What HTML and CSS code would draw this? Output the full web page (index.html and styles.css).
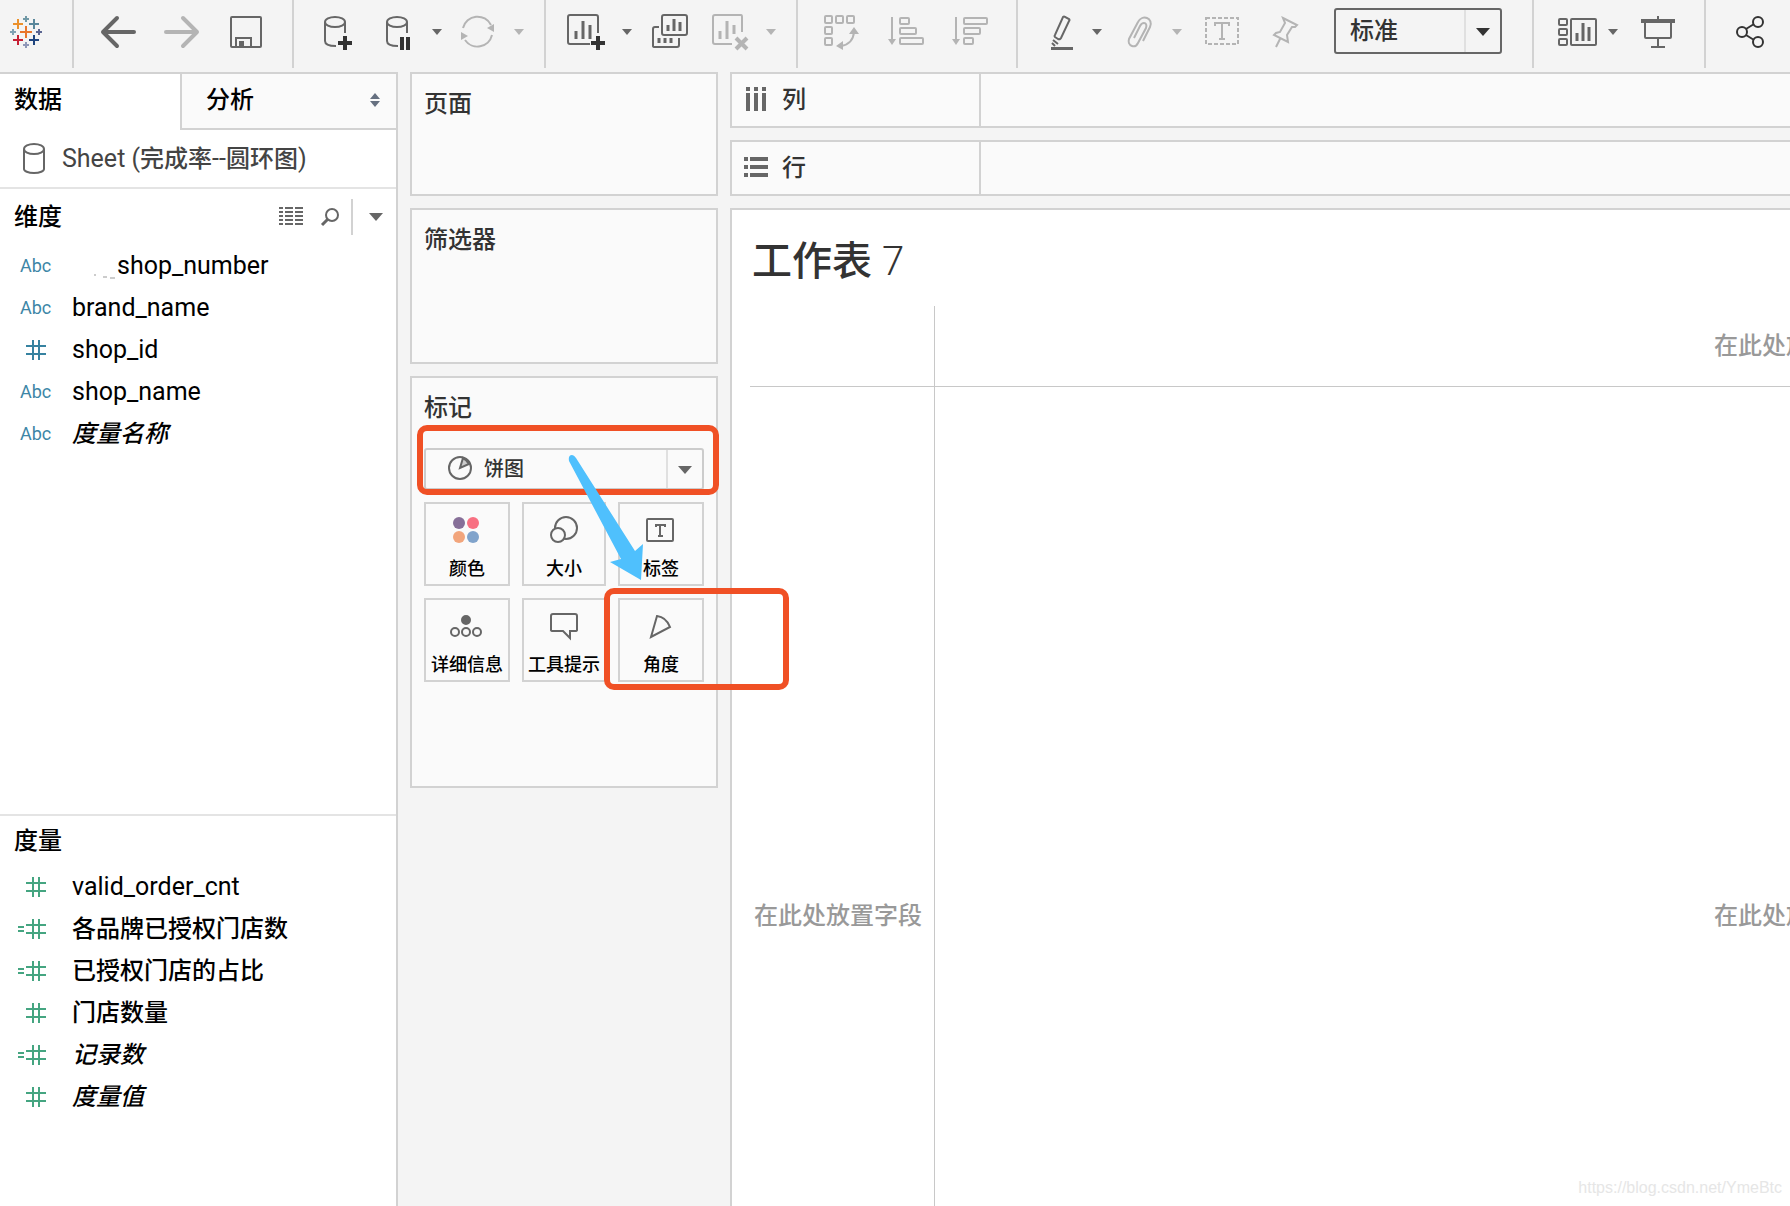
FILE: index.html
```html
<!DOCTYPE html>
<html lang="zh-CN">
<head>
<meta charset="utf-8">
<title>工作表 7</title>
<link rel="stylesheet" href="styles.css">
</head>
<body>
<div class="app">
  <header class="toolbar">
    <div class="group group-logo">
      <svg class="icon" viewBox="0 0 36 40" fill="none" stroke-width="2">
        <path stroke="#e8762c" d="M12 20h12M18 14v12"/>
        <path stroke="#7199a6" d="M15 7h6M18 4v6"/>
        <path stroke="#8f98b8" d="M15 33h6M18 30v6"/>
        <path stroke="#7fa2b4" d="M2 20h6M5 17v6"/>
        <path stroke="#5b6591" d="M28 20h6M31 17v6"/>
        <path stroke="#eb912c" d="M5 12h10M10 7v10"/>
        <path stroke="#59879b" d="M21 12h10M26 7v10"/>
        <path stroke="#c72035" d="M5 28h10M10 23v10"/>
        <path stroke="#1f447e" d="M21 28h10M26 23v10"/>
      </svg>
    </div>

    <div class="group group-even">
      <button class="tool" aria-label="撤消"><svg class="icon" viewBox="0 0 36 40"><path class="thick" d="M34 20H3M17 6 3 20l14 14"/></svg></button>
      <button class="tool off" aria-label="重做"><svg class="icon" viewBox="0 0 36 40"><path class="thick" d="M2 20h31M19 6l14 14-14 14"/></svg></button>
      <button class="tool" aria-label="保存"><svg class="icon" viewBox="0 0 36 40"><rect x="3" y="5" width="30" height="30" rx="1"/><path d="M8 35V26h15v9"/><path class="solid" d="M11 29h5v5h-5z"/></svg></button>
    </div>

    <div class="group group-data">
      <button class="tool" aria-label="新建数据源"><svg class="icon" viewBox="0 0 36 40"><ellipse cx="11" cy="10" rx="10" ry="5"/><path d="M1 10v19c0 3 4 5 11 5M21 10v11"/><path class="mark" d="M14 31h14M21 24v14"/></svg></button>
      <div class="split">
        <button class="tool" aria-label="暂停自动更新"><svg class="icon" viewBox="0 0 36 40"><ellipse cx="19" cy="10" rx="10" ry="5"/><path d="M9 10v19c0 3 4 5 11 5M29 10v11"/><path class="mark" d="M24 25v13M30 25v13"/></svg></button>
        <button class="caret" aria-label="更新选项"></button>
      </div>
      <div class="split off">
        <button class="tool" aria-label="运行更新"><svg class="icon" viewBox="0 0 36 40"><path d="M3 16a15 15 0 0 1 28-3M32 23a15 15 0 0 1-27 5"/><path class="solid" d="M34 12v8l-7-4zM1 20l7 4-7 4z"/></svg></button>
        <button class="caret" aria-label="运行选项"></button>
      </div>
    </div>

    <div class="group group-sheet">
      <div class="split">
        <button class="tool" aria-label="新建工作表"><svg class="icon" viewBox="0 0 36 40"><path d="M22 32H2q-2 0-2-2V5q0-2 2-2h26q2 0 2 2v16"/><path class="bar" d="M8 19v8M15 9v18M22 13v14"/><path class="mark" d="M23 31h14M30 24v14"/></svg></button>
        <button class="caret" aria-label="新建选项"></button>
      </div>
      <button class="tool" aria-label="复制工作表"><svg class="icon" viewBox="0 0 36 40"><rect x="8" y="3" width="25" height="20" rx="2"/><path d="M5 15H1q-2 0-2 2v17q0 1 2 1h22q2 0 2-2v-7"/><path class="bar" d="M14 13v6M20 7v12M26 10v9M5 26v5M11 26v5M17 26v5"/></svg></button>
      <div class="split off">
        <button class="tool" aria-label="清除工作表"><svg class="icon" viewBox="0 0 36 40"><path d="M20 32H3q-2 0-2-2V5q0-2 2-2h26q1 0 1 2v15"/><path class="bar" d="M8 19v8M15 9v18M22 13v9"/><path class="cross" d="M24 26l11 11M35 26L24 37"/></svg></button>
        <button class="caret" aria-label="清除选项"></button>
      </div>
    </div>

    <div class="group group-even off">
      <button class="tool" aria-label="交换行和列"><svg class="icon" viewBox="0 0 36 40"><rect x="1" y="4" width="7" height="7" rx="1"/><rect x="12" y="4" width="7" height="7" rx="1"/><rect x="23" y="4" width="7" height="7" rx="1"/><rect x="1" y="15" width="7" height="7" rx="1"/><rect x="1" y="26" width="7" height="7" rx="1"/><path d="M30 20q-1 12-13 14"/><path class="solid" d="M30 15l5 7H25zM12 34l7-5v9z"/></svg></button>
      <button class="tool" aria-label="升序排序"><svg class="icon" viewBox="0 0 36 40"><path d="M4 5v24"/><path class="solid" d="M0 27h8l-4 6z"/><rect x="12" y="6" width="9" height="6" rx="1"/><rect x="12" y="16" width="16" height="6" rx="1"/><rect x="12" y="26" width="23" height="6" rx="1"/></svg></button>
      <button class="tool" aria-label="降序排序"><svg class="icon" viewBox="0 0 36 40"><path d="M4 5v24"/><path class="solid" d="M0 27h8l-4 6z"/><rect x="12" y="6" width="23" height="6" rx="1"/><rect x="12" y="16" width="16" height="6" rx="1"/><rect x="12" y="26" width="9" height="6" rx="1"/></svg></button>
    </div>

    <div class="group group-format">
      <div class="split">
        <button class="tool" aria-label="突出显示"><svg class="icon" viewBox="0 0 36 40"><path d="M25 5q1-1 2 0l4 2q1 1 0 2l-8 17q-1 2-3 1l-3-2q-1-1 0-2zM15 28l5 4M14 31l3 3"/><path class="solid" d="M13 35h22v3H13z"/></svg></button>
        <button class="caret" aria-label="突出显示选项"></button>
      </div>
      <div class="split off">
        <button class="tool" aria-label="组成员"><svg class="icon" viewBox="0 0 36 40"><path d="M25 29l7-14c2-4 0-8-3-9s-7 0-9 4l-9 17c-1 3 0 6 3 7s5-1 6-3l8-15c1-3 0-5-2-5s-3 1-4 3l-6 12"/></svg></button>
        <button class="caret" aria-label="组选项"></button>
      </div>
      <div class="cluster">
        <button class="tool off" aria-label="显示标记标签"><svg class="icon" viewBox="0 0 36 40"><rect class="dash" x="0" y="6" width="32" height="26"/><path d="M9 14v-3h14v3M16 11v16M13 27h6"/></svg></button>
        <button class="tool off" aria-label="固定轴"><svg class="icon" viewBox="0 0 36 40"><path d="M13 6l14 7-2 2-3 0-5 8 1 7-14-7 2-2 4-1 5-9zM10 27L6 35"/></svg></button>
        <div class="fit">
          <select aria-label="适合"><option>标准</option></select>
          <span class="arrow"></span>
        </div>
      </div>
    </div>

    <div class="group group-view">
      <div class="split">
        <button class="tool" aria-label="显示/隐藏卡"><svg class="icon" viewBox="0 0 36 40"><rect x="5" y="7" width="8" height="6" rx="1"/><rect x="5" y="17" width="8" height="6" rx="1"/><rect x="5" y="27" width="8" height="6" rx="1"/><rect x="17" y="7" width="25" height="26" rx="1"/><path class="bar" d="M23 21v8M29 11v18M35 15v14"/></svg></button>
        <button class="caret" aria-label="卡选项"></button>
      </div>
      <button class="tool" aria-label="演示模式"><svg class="icon" viewBox="0 0 36 40"><path d="M5 10v15q0 1 1 1h24q1 0 1-1V10M18 4v4M18 26v9M11 35h14"/><path class="solid" d="M1 7h34v4H1z"/></svg></button>
    </div>

    <div class="group group-share">
      <button class="tool dark" aria-label="共享"><svg class="icon" viewBox="0 0 36 40"><circle cx="10" cy="20" r="5"/><circle cx="26" cy="10" r="5"/><circle cx="26" cy="30" r="5"/><path d="M14 17l8-5M14 23l8 5"/></svg></button>
    </div>
  </header>

  <main class="workspace">
    <aside class="sidebar">
      <div class="tabs">
        <button class="tab active">数据</button>
        <button class="tab">分析
          <svg class="sorter" viewBox="0 0 10 14"><path d="M0 6l5-6 5 6zM0 8h10l-5 6z"/></svg>
        </button>
      </div>
      <div class="source">
        <svg class="cylinder" viewBox="0 0 24 32"><ellipse cx="12" cy="6" rx="10" ry="5"/><path d="M2 6v20c0 2 4 4 10 4s10-2 10-4V6"/></svg>
        <span>Sheet (<b>完成率</b>--<b>圆环图</b>)</span>
      </div>

      <section class="dimensions">
        <div class="section-head">
          <h2>维度</h2>
          <button class="mini" aria-label="查看数据"><svg width="24" height="20" viewBox="0 0 24 20" stroke="#666" stroke-width="2"><path d="M0 1h4M6 1h8M16 1h8M0 5h4M6 5h8M16 5h8M0 9h4M6 9h8M16 9h8M0 13h4M6 13h8M16 13h8M0 17h4M6 17h8M16 17h8"/></svg></button>
          <button class="mini" aria-label="查找字段"><svg width="24" height="20" viewBox="-4 0 24 20" fill="none" stroke="#666" stroke-width="2"><circle cx="13" cy="8" r="6"/><path stroke-width="3" d="M9 12l-6 6"/></svg></button>
          <button class="mini menu" aria-label="维度菜单"><span class="arrow"></span></button>
        </div>
        <ul class="fields">
          <li><span class="abc">Abc</span><span class="latin masked"><svg class="smudge" viewBox="0 0 45 30"><path d="M22 25h2M31 27h4M38 28h5" stroke="#999" fill="none"/></svg>shop_number</span></li>
          <li><span class="abc">Abc</span><span class="latin">brand_name</span></li>
          <li><svg class="hash blue" viewBox="0 0 28 20"><path d="M8 6h20M8 14h20M15 0v20M21 0v20"/></svg><span class="latin">shop_id</span></li>
          <li><span class="abc">Abc</span><span class="latin">shop_name</span></li>
          <li><span class="abc">Abc</span><em>度量名称</em></li>
        </ul>
      </section>

      <section class="measures">
        <div class="section-head"><h2>度量</h2></div>
        <ul class="fields">
          <li><svg class="hash" viewBox="0 0 28 20"><path d="M8 6h20M8 14h20M15 0v20M21 0v20"/></svg><span class="latin">valid_order_cnt</span></li>
          <li><svg class="hash" viewBox="0 0 28 20"><path d="M8 6h20M8 14h20M15 0v20M21 0v20M0 8h6M0 12h6"/></svg><span>各品牌已授权门店数</span></li>
          <li><svg class="hash" viewBox="0 0 28 20"><path d="M8 6h20M8 14h20M15 0v20M21 0v20M0 8h6M0 12h6"/></svg><span>已授权门店的占比</span></li>
          <li><svg class="hash" viewBox="0 0 28 20"><path d="M8 6h20M8 14h20M15 0v20M21 0v20"/></svg><span>门店数量</span></li>
          <li><svg class="hash" viewBox="0 0 28 20"><path d="M8 6h20M8 14h20M15 0v20M21 0v20M0 8h6M0 12h6"/></svg><em>记录数</em></li>
          <li><svg class="hash" viewBox="0 0 28 20"><path d="M8 6h20M8 14h20M15 0v20M21 0v20"/></svg><em>度量值</em></li>
        </ul>
      </section>
    </aside>

    <div class="cards">
      <section class="card pages"><h3>页面</h3></section>
      <section class="card filters"><h3>筛选器</h3></section>
      <section class="card marks">
        <h3>标记</h3>
        <div class="mark-type">
          <select aria-label="标记类型"><option>饼图</option></select>
          <svg class="pie" viewBox="0 0 24 24"><circle cx="12" cy="12" r="11"/><path fill="#ccc" d="M12 12l3-10q4 2 6 6z"/></svg>
          <span class="arrow"></span>
        </div>
        <div class="mark-grid">
          <button class="mark-button"><svg class="glyph palette" viewBox="0 0 32 32"><circle cx="8" cy="9" r="6" fill="#866f98"/><circle cx="22" cy="9" r="6" fill="#f87082"/><circle cx="8" cy="23" r="6" fill="#f2a57c"/><circle cx="22" cy="23" r="6" fill="#80a3cb"/></svg>颜色</button>
          <button class="mark-button"><svg class="glyph" viewBox="0 0 32 32"><circle cx="18" cy="14" r="11"/><circle cx="10" cy="21" r="7" fill="#fafafa"/></svg>大小</button>
          <button class="mark-button"><svg class="glyph" viewBox="0 0 32 32"><rect x="2" y="5" width="26" height="22" rx="1"/><path d="M11 13v-2h9v2M15 11v11M13 22h5"/></svg>标签</button>
          <button class="mark-button"><svg class="glyph" viewBox="0 0 32 32"><circle cx="15" cy="10" r="4" fill="#666"/><circle cx="4" cy="22" r="4"/><circle cx="15" cy="22" r="4"/><circle cx="26" cy="22" r="4"/></svg>详细信息</button>
          <button class="mark-button"><svg class="glyph" viewBox="0 0 32 32"><path d="M5 4h22q2 0 2 2v14q0 1-2 1h-5v7l-7-7H5q-2 0-2-1V6q0-2 2-2z"/></svg>工具提示</button>
          <button class="mark-button"><svg class="glyph" viewBox="0 0 32 32"><path d="M12 6q9 1 13 11L6 27z"/></svg>角度</button>
        </div>
        <div class="callout callout-type"></div>
        <div class="callout callout-angle"></div>
        <svg class="pointer" viewBox="0 0 40 130"><path d="M1 7Q0 1 4 1q2 0 4 3l59 93 8-7-2 36-31-18 11-3z"/></svg>
      </section>
    </div>

    <div class="view">
      <div class="shelf">
        <div class="shelf-label"><svg width="24" height="26" viewBox="0 0 24 26" fill="#666"><path d="M2 0h4v4H2zM10 0h4v4h-4zM18 0h4v4h-4zM2 6h4v18H2zM10 6h4v18h-4zM18 6h4v18h-4z"/></svg>列</div>
      </div>
      <div class="shelf">
        <div class="shelf-label"><svg width="24" height="26" viewBox="0 0 24 26" fill="#666"><path d="M0 2h4v4H0zM0 10h4v4H0zM0 18h4v4H0zM6 2h18v4H6zM6 10h18v4H6zM6 18h18v4H6z"/></svg>行</div>
      </div>
      <section class="canvas">
        <h1>工作表 <span>7</span></h1>
        <div class="drop-grid">
          <div class="cell corner"></div>
          <div class="cell column-drop"><p>在此处放置字段</p></div>
          <div class="cell row-drop"><p>在此处放置字段</p></div>
          <div class="cell pane-drop"><p>在此处放置字段</p></div>
        </div>
      </section>
    </div>
  </main>
  <div class="watermark">https://blog.csdn.net/YmeBtc</div>
</div>
</body>
</html>
```
FILE: styles.css
```css
* {
  box-sizing: border-box;
}

body {
  margin: 0;
  background: #f4f4f4;
  color: #333;
  font: 500 24px/32px Roboto, "Noto Sans CJK SC", sans-serif;
}

h1, h2, h3, p, ul {
  margin: 0;
  padding: 0;
  font-weight: 500;
  font-size: 24px;
}

ul {
  list-style: none;
}

button, select {
  margin: 0;
  padding: 0;
  border: 0;
  border-radius: 0;
  background: none;
  color: inherit;
  font: inherit;
  appearance: none;
}

svg {
  display: block;
  flex: none;
  overflow: visible;
}

.app {
  position: relative;
  display: flex;
  flex-direction: column;
  min-height: 100vh;
  overflow: hidden;
}

/* Toolbar */

.toolbar {
  display: flex;
  height: 72px;
  --ink: #666;
}

.group {
  display: flex;
  flex: none;
  align-items: center;
  height: 68px;
  padding-bottom: 4px;
  border-right: 2px solid #d2d2d2;
}

.group-logo { padding-left: 8px; padding-right: 28px; }
.group-even { gap: 28px; padding-left: 26px; padding-right: 28px; }
.group-data { gap: 18px; padding-left: 30px; padding-right: 20px; }
.group-sheet { gap: 22px; padding-left: 22px; padding-right: 20px; }
.group-format { gap: 16px; padding-left: 20px; padding-right: 30px; }
.group-view { gap: 22px; padding-left: 20px; padding-right: 28px; }
.group-share { padding-left: 26px; border-right: 0; }

.cluster {
  display: flex;
  align-items: center;
  gap: 28px;
  padding-left: 8px;
}

.split {
  display: flex;
  align-items: center;
  gap: 18px;
}

.off { --ink: #b4b4b4; }
.dark { --ink: #333; }

.icon {
  width: 36px;
  height: 40px;
}

.tool .icon {
  fill: none;
  stroke: var(--ink);
  stroke-width: 2;
}

.tool .thick { stroke-width: 4; stroke-linecap: round; stroke-linejoin: round; }
.tool .bar { stroke-width: 3; }
.tool .mark { stroke: #333; stroke-width: 4; }
.tool .cross { stroke-width: 4; }
.tool .solid { fill: var(--ink); stroke: none; }
.tool .dash { stroke-dasharray: 4 2; }

.caret {
  width: 10px;
  height: 6px;
  background: var(--ink);
  clip-path: polygon(0 0, 100% 0, 50% 100%);
}

.arrow {
  display: block;
  width: 14px;
  height: 8px;
  background: #666;
  clip-path: polygon(0 0, 100% 0, 50% 100%);
}

.fit {
  position: relative;
  padding-bottom: 2px;
}

.fit select {
  display: block;
  width: 168px;
  height: 46px;
  padding-left: 14px;
  border: 2px solid #666;
  border-radius: 3px;
  background: linear-gradient(#e0e0e0, #e0e0e0) right 34px top / 2px 100% no-repeat;
}

.fit .arrow {
  position: absolute;
  top: 20px;
  right: 12px;
  background: #333;
}

/* Workspace */

.workspace {
  display: grid;
  flex: 1;
  grid-template-columns: 398px 308px minmax(0, 1fr);
  gap: 12px;
}

.sidebar {
  display: flex;
  flex-direction: column;
  border-top: 2px solid #d2d2d2;
  border-right: 2px solid #d2d2d2;
  background: #fff;
  color: #000;
}

.tabs {
  display: flex;
}

.tab {
  display: flex;
  flex: 1;
  align-items: center;
  justify-content: space-between;
  height: 56px;
  padding: 0 16px 2px 24px;
  border-left: 2px solid #d2d2d2;
  border-bottom: 2px solid #d2d2d2;
  background: #fafafa;
}

.tab.active {
  flex: 0 0 180px;
  padding-left: 14px;
  border-color: transparent;
  border-left: 0;
  background: #fff;
}

.sorter {
  width: 10px;
  height: 14px;
  fill: #667080;
}

.source {
  display: flex;
  align-items: center;
  gap: 16px;
  height: 59px;
  padding-left: 22px;
  border-bottom: 2px solid #e4e4e4;
  color: #444;
  font-size: 25px;
  font-weight: 400;
}

.source b {
  font-size: 24px;
  font-weight: 500;
}

.cylinder {
  width: 24px;
  height: 32px;
  fill: none;
  stroke: #666;
  stroke-width: 2;
}

.dimensions { flex: 8 1 0; }
.measures { flex: 5 1 0; border-top: 2px solid #e4e4e4; }

.section-head {
  display: flex;
  align-items: center;
  gap: 12px;
  height: 56px;
  padding: 0 13px 0 14px;
}

.section-head h2 {
  margin-right: auto;
}

.measures .section-head {
  height: 50px;
}

.mini.menu {
  display: flex;
  align-items: center;
  height: 36px;
  padding-left: 16px;
  border-left: 2px solid #d2d2d2;
}

.fields li {
  display: flex;
  align-items: center;
  height: 42px;
}

.fields .latin {
  font-size: 25px;
  font-weight: 400;
}

.abc {
  width: 72px;
  padding-left: 20px;
  color: #3d86a6;
  font-size: 18px;
  font-weight: 400;
}

.hash {
  width: 28px;
  height: 20px;
  margin: 0 26px 0 18px;
  fill: none;
  stroke: #45a581;
  stroke-width: 2;
}

.hash.blue { stroke: #3682a0; }

.masked {
  display: flex;
}

.smudge {
  width: 45px;
  height: 30px;
}

/* Cards */

.cards {
  display: flex;
  flex-direction: column;
  gap: 12px;
}

.card {
  padding: 14px 12px;
  border: 2px solid #d2d2d2;
  background: #fafafa;
}

.pages { min-height: 124px; }
.filters { min-height: 156px; }

.marks {
  position: relative;
  min-height: 412px;
}

.mark-type {
  position: relative;
  margin: 24px 0 12px;
}

.mark-type select {
  display: block;
  width: 100%;
  height: 42px;
  padding-left: 58px;
  border: 2px solid #ccc;
  border-radius: 3px;
  background: linear-gradient(#e0e0e0, #e0e0e0) right 34px top / 2px 100% no-repeat;
  font-size: 20px;
}

.pie {
  position: absolute;
  top: 8px;
  left: 24px;
  width: 24px;
  height: 24px;
  fill: none;
  stroke: #666;
  stroke-width: 2;
}

.mark-type .arrow {
  position: absolute;
  top: 18px;
  right: 12px;
}

.mark-grid {
  display: grid;
  grid-template-columns: 43fr 42fr 43fr;
  gap: 12px;
}

.mark-button {
  display: flex;
  flex-direction: column;
  align-items: center;
  gap: 10px;
  height: 84px;
  padding-top: 10px;
  border: 2px solid #d2d2d2;
  color: #000;
  font-size: 18px;
  line-height: 26px;
  white-space: nowrap;
}

.glyph {
  width: 32px;
  height: 32px;
  fill: none;
  stroke: #666;
  stroke-width: 2;
}

.glyph.palette {
  stroke: none;
}

/* Annotations drawn over the marks card */

.callout {
  position: absolute;
  z-index: 1;
  border: 6px solid #f05025;
  border-radius: 10px;
}

.callout-type { top: 47px; left: 5px; width: 302px; height: 70px; }
.callout-angle { top: 210px; left: 192px; width: 185px; height: 102px; }

.pointer {
  position: absolute;
  z-index: 2;
  top: 76px;
  left: 156px;
  width: 40px;
  height: 130px;
  fill: #4fc0fd;
}

/* View */

.view {
  display: flex;
  flex-direction: column;
  gap: 12px;
}

.shelf {
  height: 56px;
  border: 2px solid #d2d2d2;
  border-right: 0;
  background: #fafafa;
}

.shelf-label {
  display: flex;
  align-items: center;
  gap: 14px;
  width: 249px;
  height: 52px;
  padding-left: 12px;
  border-right: 2px solid #d2d2d2;
}

.canvas {
  display: flex;
  flex: 1;
  flex-direction: column;
  border: 2px solid #d2d2d2;
  border-right: 0;
  border-bottom: 0;
  background: #fff;
}

.canvas h1 {
  padding: 24px 0 16px 20px;
  font-size: 40px;
  line-height: 56px;
}

.canvas h1 span {
  font-weight: 300;
}

.drop-grid {
  display: grid;
  flex: 1;
  grid-template-columns: 185px minmax(0, 1fr);
  grid-template-rows: 81px 1fr;
  padding-left: 18px;
}

.cell {
  display: flex;
  align-items: center;
  color: #999;
}

.cell p {
  white-space: nowrap;
}

.corner, .column-drop { border-bottom: 1px solid #c8c8c8; }
.corner, .row-drop { border-right: 1px solid #c8c8c8; }
.row-drop { padding-left: 4px; }
.row-drop, .pane-drop { align-items: start; padding-top: 513px; }

.column-drop p, .pane-drop p {
  width: 76px;
  margin-left: auto;
  overflow: hidden;
}

.watermark {
  position: absolute;
  right: 8px;
  bottom: 7px;
  color: #e6e6e6;
  font: 16px/22px "Liberation Sans", sans-serif;
}
```
